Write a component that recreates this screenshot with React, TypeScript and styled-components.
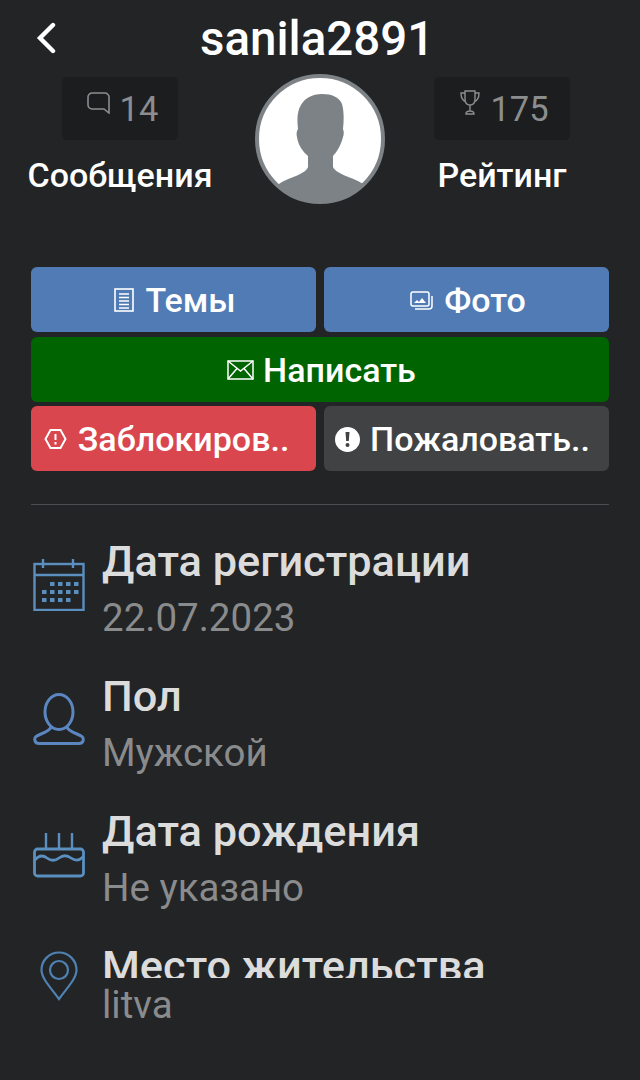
import * as React from 'react';
import styled, { createGlobalStyle } from 'styled-components';

const GlobalStyle = createGlobalStyle`
  html,
  body {
    margin: 0;
    padding: 0;
    background: #222426;
  }
`;

const Screen = styled('div')`
  width: 640px;
  height: 1080px;
  overflow: hidden;
  box-sizing: border-box;
  font-family: Roboto, 'Noto Sans', sans-serif;
  color: #fff;
`;

const Header = styled('div')`
  display: flex;
  align-items: center;
  height: 74px;
  padding: 2px 0 0 36px;
  box-sizing: border-box;
`;

const BackIcon = styled('svg')`
  width: 20px;
  height: 32px;
`;

const Title = styled('div')`
  margin-left: 144px;
  margin-top: 2px;
  font-size: 47.5px;
  font-weight: 500;
  line-height: 54px;
`;

const StatsRow = styled('div')`
  display: flex;
  align-items: flex-start;
  padding-left: 28px;
  height: 193px;
`;

const Stat = styled('div')`
  width: 184px;
  display: flex;
  flex-direction: column;
  align-items: center;
  padding-top: 3px;
`;

const StatBox = styled('div')`
  display: flex;
  align-items: center;
  justify-content: center;
  gap: 10px;
  height: 63px;
  width: ${props => props.$width}px;
  padding-left: 5px;
  box-sizing: border-box;
  border-radius: 5px;
  background: #1c1d1f;
  color: #8b8d8f;
  font-size: 34.500px;
`;

const StatIcon = styled('svg')`
  margin-top: -12px;
`;

const StatLabel = styled('div')`
  margin-top: 15px;
  font-size: 34px;
  font-weight: 500;
  line-height: 40px;
  white-space: nowrap;
`;

const Avatar = styled('svg')`
  width: 130px;
  height: 130px;
  margin: 0 25px 0 43px;
  flex: none;
`;

const Buttons = styled('div')`
  display: grid;
  grid-template-columns: 285px 285px;
  grid-auto-rows: 65px;
  column-gap: 8px;
  row-gap: 4.5px;
  padding-left: 31px;
`;

const Button = styled('div')`
  display: flex;
  align-items: center;
  justify-content: center;
  gap: ${props => props.$gap ?? 11}px;
  grid-column: ${props => (props.$wide ? '1 / 3' : 'auto')};
  padding: 1px ${props => props.$trail ?? 0}px 0 3px;
  border-radius: 6px;
  background: ${props => props.$color};
  font-size: 34px;
  font-weight: 500;
  white-space: nowrap;
`;

const Divider = styled('div')`
  height: 1px;
  margin: 33px 31px 0;
  background: #4b4e51;
`;

const InfoList = styled('div')`
  margin-top: 32px;
`;

const InfoRow = styled('div')`
  display: flex;
  height: 135px;
  padding-left: 33px;
`;

const IconCell = styled('div')`
  width: 69px;
  flex: none;
  box-sizing: border-box;
  display: flex;
  justify-content: center;
  align-items: flex-start;
  padding: ${props => props.$top}px 17px 0 0;
`;

const InfoText = styled('div')`
  display: flex;
  flex-direction: column;
`;

const InfoTitle = styled('div')`
  font-size: 43.3px;
  font-weight: 500;
  line-height: 50px;
  color: #dcdcdc;
  white-space: nowrap;
  overflow: hidden;
  height: ${props => (props.$clipped ? 36 : 54)}px;
`;

const InfoValue = styled('div')`
  font-size: 38.500px;
  line-height: 54px;
  color: #8a8b8c;
  white-space: nowrap;
`;

const calendarDots = 'M17 25h4.500M25 25h4.500M33 25h4.500M41 25h4.500M9 33h4.500M17 33h4.500M25 33h4.500M33 33h4.500M41 33h4.500M9 41h4.500M17 41h4.500M25 41h4.500M33 41h4.500';

const CalendarIcon = () => (
  <svg width="52" height="52" viewBox="0 0 52 52" fill="none" stroke="#5a8fc0" strokeWidth="2.4">
    <rect x="1.500" y="5" width="49" height="46" />
    <path d="M1.500 16h49M10 0v9M40 0v9" />
    <path d={calendarDots} strokeWidth="4" />
  </svg>
);

const UserIcon = () => (
  <svg width="52" height="52" viewBox="0 0 52 52" fill="none" stroke="#5b86c0" strokeWidth="3">
    <ellipse cx="26" cy="19" rx="14" ry="17.500" />
    <path d="M18 34c-1 3-5 5-10 7-5 2-7 3-6 7 .5 1.500 2 2.500 4 2.500h40c2 0 3.500-1 4-2.500 1-4-1-5-6-7-5-2-9-4-10-7" />
  </svg>
);

const CakeIcon = () => (
  <svg width="52" height="46" viewBox="0 0 52 46" fill="none" stroke="#5a8fc0" strokeWidth="2.800">
    <rect x="1.500" y="17" width="49" height="27" rx="3" />
    <path d="M13 1v16M26 1v16M39 1v16" strokeWidth="2.400" />
    <path d="M2 28c4-5 8-5 12-2s8 3 12 0 8-3 12 0 8 3 12-1" />
  </svg>
);

const PinIcon = () => (
  <svg width="38" height="50" viewBox="0 0 38 50" fill="none" stroke="#4f82b3" strokeWidth="2.200">
    <path d="M19 48C12 38 1.500 28 1.500 19a17.500 17.500 0 0 1 35 0C36.500 28 26 38 19 48Z" />
    <circle cx="19" cy="19" r="9" />
  </svg>
);

const DocIcon = () => (
  <svg width="20" height="24" viewBox="0 0 20 24" fill="none" stroke="#fff">
    <rect x="1" y="1" width="18" height="22" strokeWidth="1.600" />
    <path d="M5 6h10M5 9.500h10M5 13h10M5 16.500h10M5 20h10" strokeWidth="1.400" />
  </svg>
);

const PhotoIcon = () => (
  <svg width="23" height="19" viewBox="0 0 23 19" fill="none" stroke="#fff" strokeWidth="1.500">
    <rect x="1" y="1" width="18" height="14" rx="2" />
    <path d="M5 18h14c2 0 3-1 3-3V5" />
    <path d="M4 12l3-3 2 2 3-4 4 5Z" fill="#fff" stroke="none" />
  </svg>
);

const MailIcon = () => (
  <svg width="27" height="20" viewBox="0 0 27 20" fill="none" stroke="#fff" strokeWidth="1.500">
    <rect x="1" y="1" width="25" height="18" />
    <path d="M1 1l12.500 10L26 1M1 19l9-10.500M26 19l-9-10.500" />
  </svg>
);

const BlockIcon = () => (
  <svg width="23" height="22" viewBox="0 0 23 22" fill="none" stroke="#fff" strokeWidth="2">
    <path d="M6.500 2h10l5 9-5 9h-10l-5-9Z" />
    <path d="M11.500 6v6M11.500 14v2.500" />
  </svg>
);

const AlertIcon = () => (
  <svg width="25" height="25" viewBox="0 0 25 25">
    <circle cx="12.500" cy="12.500" r="12.500" fill="#fff" />
    <path d="M10.500 5h4l-.7 9h-2.600ZM12.500 16a2 2 0 1 1 0 4 2 2 0 0 1 0-4Z" fill="#414243" />
  </svg>
);

const infoRows = [
  { title: 'Дата регистрации', value: '22.07.2023', icon: <CalendarIcon />, top: 22 },
  { title: 'Пол', value: 'Мужской', icon: <UserIcon />, top: 21 },
  { title: 'Дата рождения', value: 'Не указано', icon: <CakeIcon />, top: 25 },
  { title: 'Место жительства', value: 'litva', icon: <PinIcon />, top: 9, clipped: true },
];

const App = () => {
  return (
    <>
      <GlobalStyle />
      <Screen>
        <Header>
          <BackIcon viewBox="0 0 20 32" fill="none" stroke="#fff" strokeWidth="4.400" strokeLinecap="round">
            <path d="M17 3L4 16l13 13" />
          </BackIcon>
          <Title>sanila2891</Title>
        </Header>
        <StatsRow>
          <Stat>
            <StatBox $width={116}>
              <StatIcon width="23" height="22" viewBox="0 0 23 22" fill="none" stroke="#8b8d8f" strokeWidth="1.600">
                <path d="M5 1h13c2 0 4 2 4 4v16l-5-4H5c-2 0-4-2-4-4V5c0-2 2-4 4-4Z" />
              </StatIcon>
              14
            </StatBox>
            <StatLabel>Сообщения</StatLabel>
          </Stat>
          <Avatar viewBox="0 0 130 130">
            <defs>
              <clipPath id="avatar-clip">
                <circle cx="65" cy="65" r="63" />
              </clipPath>
            </defs>
            <circle cx="65" cy="65" r="63" fill="#fff" />
            <path
              clipPath="url(#avatar-clip)"
              d="M24 110c10-7 26-9 29-17v-11c-5-4-10-11-11-19-1-4 0-6 1-8-1-9-1-18 3-24 4-7 11-11 21-11 10 0 17 3 20 10 2 7 2 16 1 25 1 3 1 5 0 8-2 8-6 15-10 19v11c4 8 20 10 30 17l-4 20H24Z"
              fill="#7d8286"
            />
            <circle cx="65" cy="65" r="63" fill="none" stroke="#7d8286" strokeWidth="4" />
          </Avatar>
          <Stat>
            <StatBox $width={136}>
              <StatIcon width="20" height="25" viewBox="0 0 20 25" fill="none" stroke="#8b8d8f" strokeWidth="1.400">
                <path d="M5 1h10v8c0 4-2 6-5 6s-5-2-5-6ZM5 3H1c0 5 2 8 5 9M15 3h4c0 5-2 8-5 9M10 15v6M6 24c0-2 2-3 4-3s4 1 4 3Z" />
              </StatIcon>
              175
            </StatBox>
            <StatLabel>Рейтинг</StatLabel>
          </Stat>
        </StatsRow>
        <Buttons>
          <Button $color="#517bb5">
            <DocIcon />
            Темы
          </Button>
          <Button $color="#517bb5">
            <PhotoIcon />
            Фото
          </Button>
          <Button $color="#006400" $wide $gap={9}>
            <MailIcon />
            Написать
          </Button>
          <Button $color="#d9464e" $trail={17}>
            <BlockIcon />
            Заблокиров..
          </Button>
          <Button $color="#414243" $gap={10} $trail={11}>
            <AlertIcon />
            Пожаловать..
          </Button>
        </Buttons>
        <Divider />
        <InfoList>
          {infoRows.map(row => (
            <InfoRow key={row.title}>
              <IconCell $top={row.top}>{row.icon}</IconCell>
              <InfoText>
                <InfoTitle $clipped={row.clipped}>{row.title}</InfoTitle>
                <InfoValue>{row.value}</InfoValue>
              </InfoText>
            </InfoRow>
          ))}
        </InfoList>
      </Screen>
    </>
  );
};

export default App;
